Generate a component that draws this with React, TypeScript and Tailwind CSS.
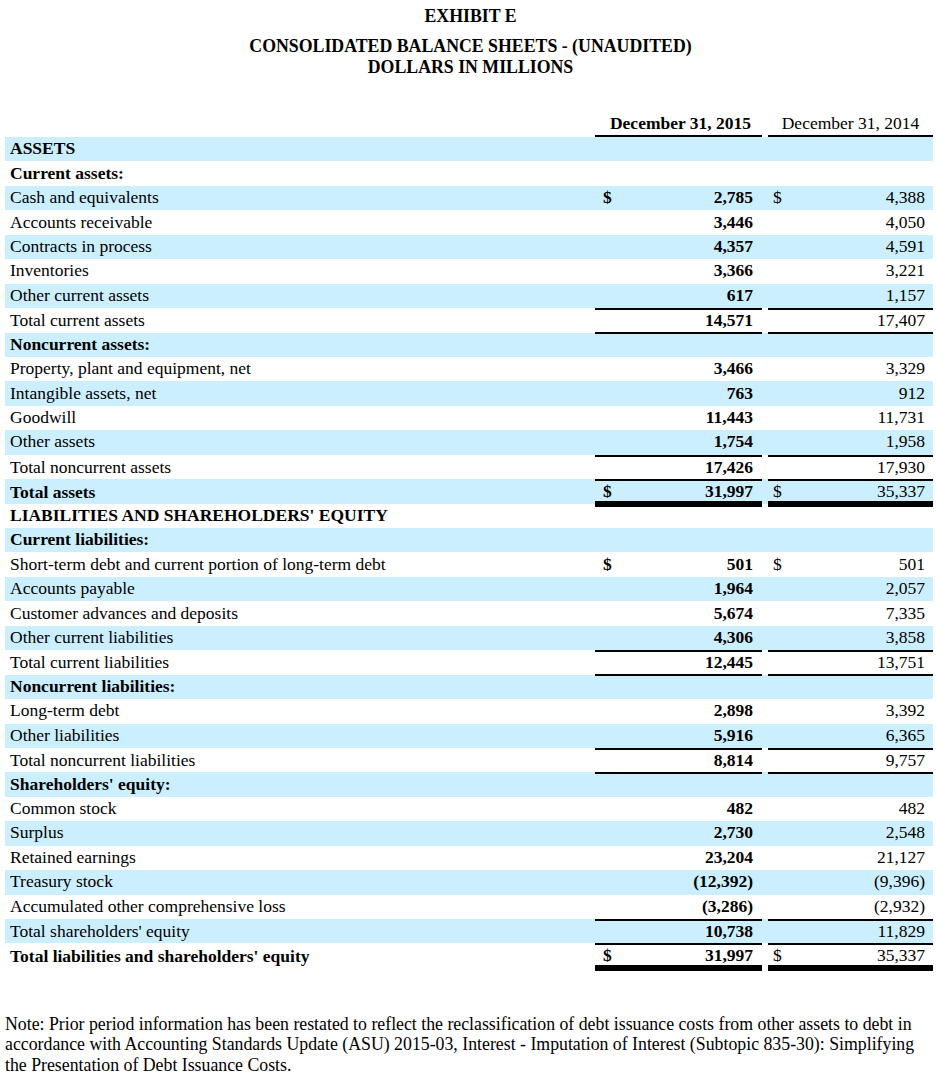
type Row = {
  label: string;
  kind?: "section" | "sub" | "item";
  a?: string;
  b?: string;
  dollar?: boolean;
  total?: "single" | "grand";
  boldLabel?: boolean;
};

const rows: Row[] = [
  { label: "ASSETS", kind: "section" },
  { label: "Current assets:", kind: "sub" },
  { label: "Cash and equivalents", a: "2,785", b: "4,388", dollar: true },
  { label: "Accounts receivable", a: "3,446", b: "4,050" },
  { label: "Contracts in process", a: "4,357", b: "4,591" },
  { label: "Inventories", a: "3,366", b: "3,221" },
  { label: "Other current assets", a: "617", b: "1,157" },
  { label: "Total current assets", a: "14,571", b: "17,407", total: "single" },
  { label: "Noncurrent assets:", kind: "sub" },
  { label: "Property, plant and equipment, net", a: "3,466", b: "3,329" },
  { label: "Intangible assets, net", a: "763", b: "912" },
  { label: "Goodwill", a: "11,443", b: "11,731" },
  { label: "Other assets", a: "1,754", b: "1,958" },
  { label: "Total noncurrent assets", a: "17,426", b: "17,930", total: "single" },
  { label: "Total assets", a: "31,997", b: "35,337", dollar: true, total: "grand", boldLabel: true },
  { label: "LIABILITIES AND SHAREHOLDERS' EQUITY", kind: "section" },
  { label: "Current liabilities:", kind: "sub" },
  { label: "Short-term debt and current portion of long-term debt", a: "501", b: "501", dollar: true },
  { label: "Accounts payable", a: "1,964", b: "2,057" },
  { label: "Customer advances and deposits", a: "5,674", b: "7,335" },
  { label: "Other current liabilities", a: "4,306", b: "3,858" },
  { label: "Total current liabilities", a: "12,445", b: "13,751", total: "single" },
  { label: "Noncurrent liabilities:", kind: "sub" },
  { label: "Long-term debt", a: "2,898", b: "3,392" },
  { label: "Other liabilities", a: "5,916", b: "6,365" },
  { label: "Total noncurrent liabilities", a: "8,814", b: "9,757", total: "single" },
  { label: "Shareholders' equity:", kind: "sub" },
  { label: "Common stock", a: "482", b: "482" },
  { label: "Surplus", a: "2,730", b: "2,548" },
  { label: "Retained earnings", a: "23,204", b: "21,127" },
  { label: "Treasury stock", a: "(12,392)", b: "(9,396)" },
  { label: "Accumulated other comprehensive loss", a: "(3,286)", b: "(2,932)" },
  { label: "Total shareholders' equity", a: "10,738", b: "11,829", total: "single" },
  { label: "Total liabilities and shareholders' equity", a: "31,997", b: "35,337", dollar: true, total: "grand", boldLabel: true },
];

function ValueCell({ row, bold }: { row: Row; bold: boolean }) {
  const value = bold ? row.a : row.b;
  let border = "pb-[2px]";
  if (row.total === "single") border = "border-y-2 border-black pb-[2px]";
  if (row.total === "grand") border = "border-t-2 border-b-[6px] border-b-black border-t-black border-b-double";
  return (
    <div className={`flex items-center justify-between ${bold ? "pl-[8px] pr-[9px] font-bold" : "pl-[5px] pr-[8px]"} ${border}`}>
      <span>{row.dollar ? "$" : ""}</span>
      <span>{value}</span>
    </div>
  );
}

export default function App() {
  return (
    <div className="w-[941px] bg-white text-black font-['Liberation_Serif','Times_New_Roman',serif]">
      <div className="pt-[6px] text-center font-bold text-[17.8px] leading-[20px]">
        <div>EXHIBIT E</div>
        <div className="mt-[10px]">CONSOLIDATED BALANCE SHEETS - (UNAUDITED)</div>
        <div className="mt-[1px]">DOLLARS IN MILLIONS</div>
      </div>

      <div className="mt-[35px] ml-[5px] w-[928px] text-[17.5px]">
        <div className="grid grid-cols-[590px_167px_6px_165px] h-[25px] leading-[22px]">
          <div />
          <div className="border-b-2 border-black text-center font-bold pl-[4px]">December 31, 2015</div>
          <div />
          <div className="border-b-2 border-black text-center">December 31, 2014</div>
        </div>
        {rows.map((row, i) => (
          <div
            key={i}
            className={`grid grid-cols-[590px_167px_6px_165px] h-[24.45px] leading-[20px] ${i % 2 === 0 ? "bg-[#ccefff]" : "bg-white"}`}
          >
            <div className={`flex items-center pl-[5px] pb-[2px] ${row.kind || row.boldLabel ? "font-bold" : ""}`}>{row.label}</div>
            {row.kind ? (
              <>
                <div />
                <div />
                <div />
              </>
            ) : (
              <>
                <ValueCell row={row} bold />
                <div />
                <ValueCell row={row} bold={false} />
              </>
            )}
          </div>
        ))}
      </div>

      <p className="mt-[46px] px-[5px] text-[17.8px] leading-[20.5px]">
        Note: Prior period information has been restated to reflect the reclassification of debt issuance costs from other assets to debt in accordance with Accounting Standards Update (ASU) 2015-03, Interest - Imputation of Interest (Subtopic 835-30): Simplifying the Presentation of Debt Issuance Costs.
      </p>
    </div>
  );
}
